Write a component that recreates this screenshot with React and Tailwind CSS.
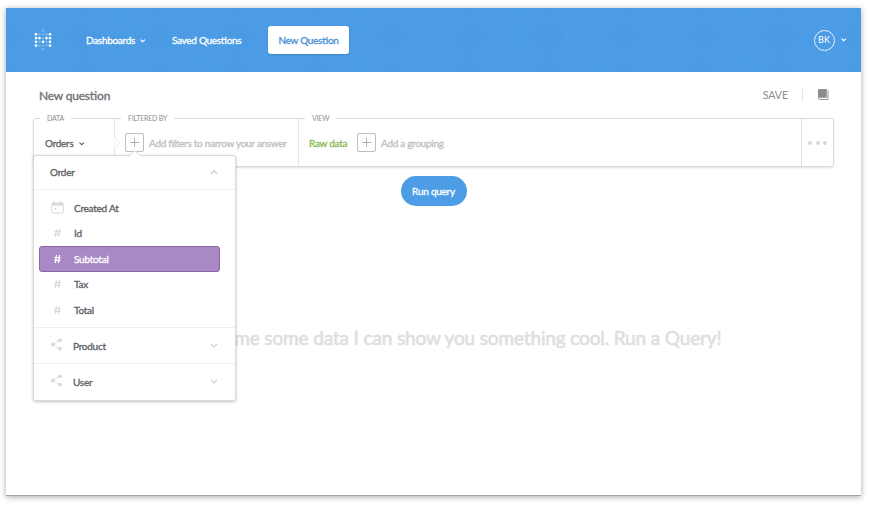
import React from "react";

function Chevron({ className = "", size = 6, up = false, weight = 1.5 }) {
  return (
    <svg
      className={className}
      width={size}
      height={size * 0.6}
      viewBox="0 0 10 6"
      fill="none"
      stroke="currentColor"
      strokeWidth={(weight * 10) / size}
      overflow="visible"
    >
      <path d={up ? "M1 5l4-4 4 4" : "M1 1l4 4 4-4"} />
    </svg>
  );
}

const LOGO = [
  [0, 0, 0.25, 0, 0],
  [1, 0.25, 0.25, 0.25, 1],
  [1, 1, 0.25, 1, 1],
  [1, 0.25, 1, 0.25, 1],
  [1, 0.25, 0.25, 0.25, 1],
  [0, 0, 0.25, 0, 0],
];

function Logo() {
  return (
    <svg width="18" height="22" viewBox="0 0 18 22" fill="white">
      {LOGO.map((row, y) =>
        row.map((o, x) =>
          o ? (
            <circle key={`${x}-${y}`} cx={2 + x * 3.5} cy={1.6 + y * 3.75} r="1.35" opacity={o} />
          ) : null
        )
      )}
    </svg>
  );
}

function HeaderPattern() {
  return (
    <svg className="absolute inset-0" width="855" height="64">
      <defs>
        <pattern id="diamonds" width="77.6" height="38.8" patternUnits="userSpaceOnUse" x="37" y="9">
          <path d="M38.8 0l19.4 19.4-19.4 19.4-19.4-19.4z" fill="#4595e0" opacity=".3" />
          <path d="M0 0l19.4 19.4L0 38.8zM77.6 0v38.8L58.2 19.4z" fill="#4595e0" opacity=".2" />
        </pattern>
      </defs>
      <rect width="855" height="64" fill="url(#diamonds)" />
    </svg>
  );
}

function Header() {
  return (
    <header className="relative h-16 bg-[#4c9de6] text-white">
      <HeaderPattern />
      <div className="relative flex h-16 items-center pl-[28px] pr-[15px] text-[10px] tracking-[-0.3px] [-webkit-text-stroke:0.3px]">
        <Logo />
        <a className="ml-[34px] flex w-[59px] items-center justify-between">
          Dashboards
          <Chevron className="mt-[2px]" size={5.5} weight={1.1} />
        </a>
        <a className="ml-[27px] w-[96px] whitespace-nowrap">Saved Questions</a>
        <a className="flex h-7 w-[81px] items-center justify-center rounded-[3px] bg-white text-[#4a90d9] shadow-[0_1px_2px_rgba(0,0,0,0.15)]">
          New Question
        </a>
        <div className="ml-auto flex items-center">
          <span className="flex size-[21px] items-center justify-center rounded-full border border-white/85 text-[9px] tracking-normal [-webkit-text-stroke:0px]">
            BK
          </span>
          <Chevron className="ml-[6px]" size={5.5} weight={1.1} />
        </div>
      </div>
    </header>
  );
}

function PlusBox() {
  return (
    <span className="flex size-[19px] shrink-0 items-center justify-center rounded-[2px] border border-[#bdbdbd] text-[#b0b0b0]">
      <svg width="9" height="9" viewBox="0 0 9 9" stroke="currentColor" strokeWidth="1">
        <path d="M4.5 0v9M0 4.5h9" />
      </svg>
    </span>
  );
}

function Legend({ children, className }) {
  return (
    <span
      className={`absolute top-[-6px] bg-white px-[7px] text-[7px] leading-[11px] tracking-[-0.2px] text-[#8f8f8f] [-webkit-text-stroke:0px] ${className}`}
    >
      {children}
    </span>
  );
}

function QueryBar() {
  return (
    <div className="relative flex h-[49px] w-[801px] rounded-[3px] border border-[#dcdcdc] text-[10px] tracking-[-0.28px] shadow-[0_1px_2px_rgba(0,0,0,0.12)] [-webkit-text-stroke:0.3px]">
      <div className="relative flex w-[81px] items-center border-r border-[#e4e4e4] pl-[11px] text-[#5f6267]">
        <Legend className="left-[6px]">DATA</Legend>
        <span className="pt-[2px]">Orders</span>
        <Chevron className="ml-[5px] mt-[3px]" size={5.5} weight={1.1} />
        <svg className="absolute -right-[7px] top-[17px]" width="7" height="14" fill="white" stroke="#e4e4e4">
          <path d="M0.5 0.5l5.5 6-5.5 6" />
        </svg>
      </div>
      <div className="relative flex w-[184px] items-center border-r border-[#e4e4e4] pl-[10px] text-[#bdbdbd]">
        <Legend className="left-[6px]">FILTERED BY</Legend>
        <PlusBox />
        <span className="ml-[5px] whitespace-nowrap pt-[2px]">Add filters to narrow your answer</span>
      </div>
      <div className="relative flex flex-1 items-center pl-[10px]">
        <Legend className="left-[6px]">VIEW</Legend>
        <span className="w-[48px] whitespace-nowrap pt-[2px] text-[#86b854]">Raw data</span>
        <span className="flex items-center text-[#bdbdbd]">
          <PlusBox />
          <span className="ml-[5px] pt-[2px]">Add a grouping</span>
        </span>
      </div>
      <div className="flex w-[32px] items-center justify-center gap-[3.5px] border-l border-[#dcdcdc]">
        <i className="size-[4px] rounded-full bg-[#d8d8d8]" />
        <i className="size-[4px] rounded-full bg-[#d8d8d8]" />
        <i className="size-[4px] rounded-full bg-[#d8d8d8]" />
      </div>
    </div>
  );
}

function CalendarIcon() {
  return (
    <svg width="13" height="13" viewBox="0 0 13 13" fill="none" stroke="currentColor">
      <rect x="0.7" y="2" width="11.6" height="10" rx="1.2" />
      <path d="M1 3.3h11" strokeWidth="2.6" />
      <path d="M3.3 0v2M9.7 0v2" strokeWidth="1.3" />
      <rect x="3.6" y="6.8" width="1.8" height="1.8" fill="currentColor" stroke="none" />
    </svg>
  );
}

function HashIcon({ bold = false }) {
  return (
    <svg width="7" height="8" viewBox="0 0 7 8" fill="none" stroke="currentColor" strokeWidth={bold ? 1.3 : 1.1}>
      <path d="M2.5 0L1.3 8M5.6 0L4.4 8M0.5 2.6h6.2M0.2 5.4h6.2" />
    </svg>
  );
}

function ShareIcon() {
  return (
    <svg width="11" height="13" viewBox="0 0 11 13" fill="currentColor" stroke="currentColor">
      <path d="M8.7 2.2L2 6.4l6.7 4.4" fill="none" strokeWidth="0.7" />
      <circle cx="8.8" cy="2.3" r="1.9" stroke="none" />
      <circle cx="2" cy="6.4" r="2" stroke="none" />
      <circle cx="8.8" cy="10.7" r="1.9" stroke="none" />
    </svg>
  );
}

const FIELDS = [
  { name: "Created At", icon: <CalendarIcon /> },
  { name: "Id", icon: <HashIcon /> },
  { name: "Subtotal", icon: <HashIcon bold />, selected: true },
  { name: "Tax", icon: <HashIcon /> },
  { name: "Total", icon: <HashIcon /> },
];

function FieldPopover() {
  return (
    <div className="absolute left-[27px] top-[147px] z-10 w-[203px] rounded-[3px] border border-[#dadada] bg-white pb-px text-[10px] tracking-[-0.25px] text-[#5c5e63] shadow-[0_1px_3px_rgba(0,0,0,0.25)] [-webkit-text-stroke:0.3px]">
      <svg className="absolute left-[94px] top-[-6px]" width="14" height="7" fill="white">
        <path d="M0 6.5L7 0.7l7 5.8" stroke="#dadada" />
        <path d="M1.4 7L7 2l5.6 5z" />
      </svg>
      <div className="flex h-[34px] items-center justify-between border-b border-[#efefef] pl-4 pr-[17px]">
        Order
        <Chevron className="text-[#d4d4d4]" size={8} weight={1.4} up />
      </div>
      <div className="flex h-[137px] flex-col pl-[5px] pr-[15px] pt-[5px]">
        {FIELDS.map(({ name, icon, selected }) => (
          <div
            key={name}
            className={
              selected
                ? "flex h-[25.5px] shrink-0 items-center rounded-[3px] border border-[#8a68a6] bg-[#a989c5] pl-[10px] text-white"
                : "flex h-[25.5px] shrink-0 items-center border border-transparent pl-[10px]"
            }
          >
            <span
              className={
                selected
                  ? "flex w-[14px] justify-center text-white"
                  : "flex w-[14px] justify-center text-[#d9d9d9]"
              }
            >
              {icon}
            </span>
            <span className="ml-[10px] pt-px">{name}</span>
          </div>
        ))}
      </div>
      {["Product", "User"].map((name) => (
        <div key={name} className="flex h-9 items-center border-t border-[#efefef] pl-[17px] pr-[17px]">
          <span className="-mt-[2px] text-[#d9d9d9]">
            <ShareIcon />
          </span>
          <span className="ml-[11px] flex-1 pt-[2px]">{name}</span>
          <Chevron className="text-[#d4d4d4]" size={8} weight={1.4} />
        </div>
      ))}
    </div>
  );
}

function BookIcon() {
  return (
    <svg width="11" height="12" viewBox="0 0 11 12">
      <path d="M1.2 0H8.8v8.8H1.2A1.2 1.2 0 0 0 0 9.6V1.2A1.2 1.2 0 0 1 1.2 0z" fill="#8c8c8c" />
      <path d="M10 1.2v9.3H1.6a1.2 1.2 0 0 1-1.1-1.2" fill="none" stroke="#9b9b9b" />
    </svg>
  );
}

export default function App() {
  return (
    <div className="h-[505px] w-[870px] overflow-hidden bg-white pl-[6px] pt-[8px] font-['Lato',sans-serif] [font-feature-settings:'liga'_1]">
      <main className="relative h-[488px] w-[855px] border-b border-[#a6a6a6] bg-white shadow-[0_1px_6px_rgba(0,0,0,0.35)]">
        <Header />
        <div className="flex h-[46px] items-center pl-[33px] pr-[32px]">
          <h1 className="pt-[2px] text-[12px] tracking-[-0.2px] text-[#707070] [-webkit-text-stroke:0.35px]">
            New question
          </h1>
          <span className="ml-auto pt-[2px] text-[10.5px] text-[#8c8c8c]">SAVE</span>
          <span className="ml-[14px] h-[12px] w-px bg-[#e0e0e0]" />
          <span className="ml-[15px]">
            <BookIcon />
          </span>
        </div>
        <div className="pl-[27px]">
          <QueryBar />
        </div>
        <div className="flex justify-center pt-[9px]">
          <button className="h-[30px] w-[66px] rounded-full bg-[#4c9de6] text-[10px] tracking-[-0.25px] text-white [-webkit-text-stroke:0.3px]">
            Run query
          </button>
        </div>
        <p className="mt-[120px] whitespace-nowrap text-center text-[19px] leading-6 tracking-[-0.14px] text-[#dfdfdf] [-webkit-text-stroke:0.7px]">
          If you give me some data I can show you something cool. Run a Query!
        </p>
        <FieldPopover />
      </main>
    </div>
  );
}
